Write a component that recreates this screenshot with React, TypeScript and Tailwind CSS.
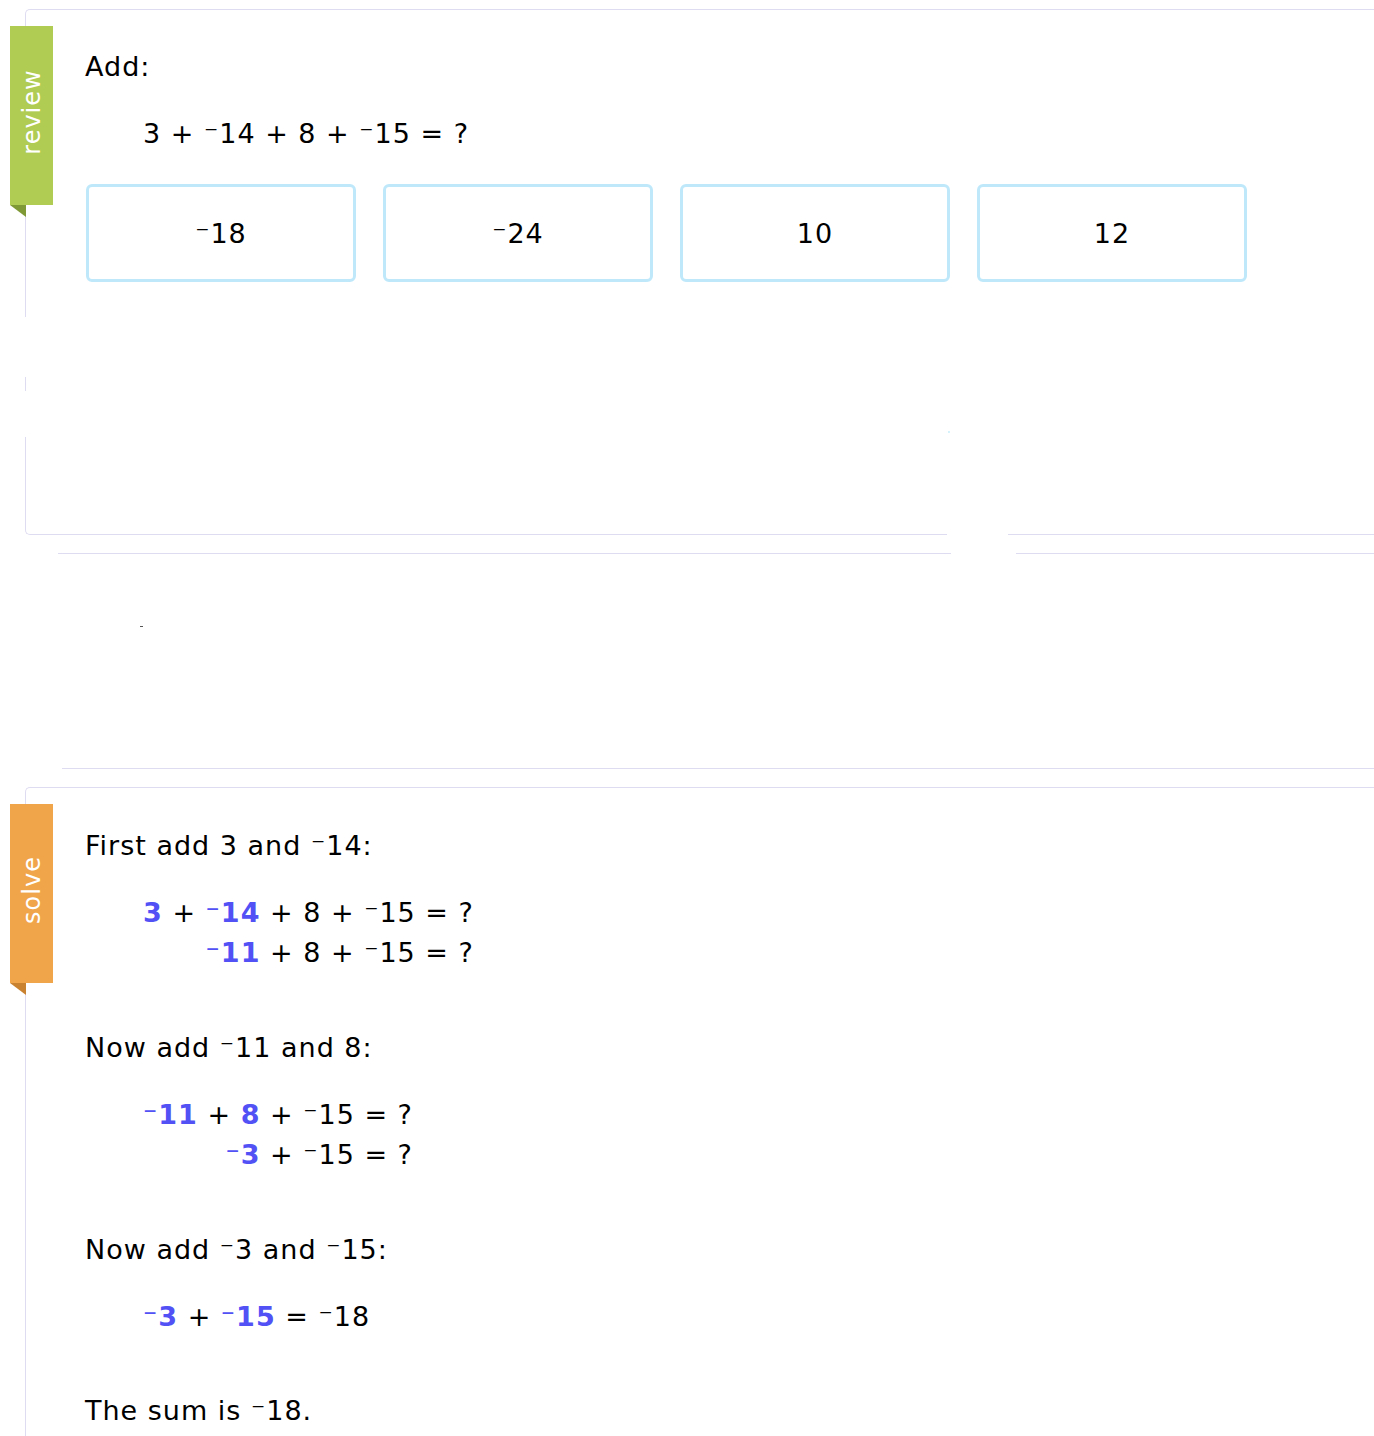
const font = { fontFamily: '"DejaVu Sans", Verdana, sans-serif' };

function Ribbon({ label, color, fold }: { label: string; color: string; fold: string }) {
  return (
    <div className="absolute left-[-16px] top-[16px]">
      <div className={`w-[43px] h-[179px] ${color} flex items-center justify-center pb-[8px]`}>
        <span className="text-white text-[24px] leading-none -rotate-90 whitespace-nowrap">{label}</span>
      </div>
      <svg width="16" height="12" className="block">
        <polygon points="0,0 16,0 16,12" className={fold} />
      </svg>
    </div>
  );
}

const B = ({ children }: { children: React.ReactNode }) => (
  <span className="font-bold text-[#5151f5]">{children}</span>
);

function Equation({ rows }: { rows: [React.ReactNode, React.ReactNode][] }) {
  return (
    <div className="ml-[58px] grid grid-cols-[auto_auto] w-fit">
      {rows.map(([a, b], i) => (
        <div key={i} className="contents">
          <div className="text-right whitespace-pre">{a}</div>
          <div className="whitespace-pre">{b}</div>
        </div>
      ))}
    </div>
  );
}

const answers = ["⁻18", "⁻24", "10", "12"];

export default function App() {
  return (
    <div style={font} className="relative w-[1374px] h-[1436px] overflow-hidden bg-white text-black text-[27px] leading-[40px] tracking-[1px]">
      {/* review card */}
      <div className="relative ml-[25px] mt-[9px] h-[526px] border-t border-l border-b border-[#dedcf1] rounded-tl-[5px] rounded-bl-[5px] pl-[59px] pt-[37px]">
        <Ribbon label="review" color="bg-[#b0cc53]" fold="fill-[#7e9935]" />
        <div>Add:</div>
        <div className="mt-[27px] ml-[58px] whitespace-pre">3 + ⁻14 + 8 + ⁻15 = ?</div>
        <div className="mt-[30px] flex gap-[27px] pl-px">
          {answers.map((a) => (
            <div key={a} className="w-[270px] h-[98px] border-[3px] border-[#bfe9fb] rounded-[6px] flex items-center justify-center pt-[2px]">
              {a}
            </div>
          ))}
        </div>
        {/* rendering gaps in the card border */}
        <div className="absolute left-[-1px] top-[307px] w-[2px] h-[60px] bg-white" />
        <div className="absolute left-[-1px] top-[381px] w-[2px] h-[46px] bg-white" />
        <div className="absolute left-[921px] bottom-[-1px] w-[61px] h-[2px] bg-white" />
        <div className="absolute left-[922px] top-[421px] w-[2px] h-[2px] bg-[#d6f3fb]" />
      </div>

      {/* divider lines */}
      <div className="mt-[18px] flex">
        <div className="ml-[58px] w-[893px] border-t border-[#dedcf1]" />
        <div className="ml-[65px] flex-1 border-t border-[#dedcf1]" />
      </div>
      <div className="relative h-[214px]">
        <div className="absolute left-[140px] top-[72px] w-[3px] h-px bg-[#555]" />
      </div>
      <div className="ml-[62px] border-t border-[#dedcf1]" />

      {/* solve card */}
      <div className="relative ml-[25px] mt-[18px] h-[700px] border-t border-l border-[#dedcf1] rounded-tl-[5px] pl-[59px] pt-[38px]">
        <Ribbon label="solve" color="bg-[#f0a54a]" fold="fill-[#c98230]" />
        <div>First add 3 and ⁻14:</div>
        <div className="mt-[27px]">
          <Equation
            rows={[
              [<><B>3</B> + <B>⁻14</B></>, " + 8 + ⁻15 = ?"],
              [<B>⁻11</B>, " + 8 + ⁻15 = ?"],
            ]}
          />
        </div>
        <div className="mt-[55px]">Now add ⁻11 and 8:</div>
        <div className="mt-[27px]">
          <Equation
            rows={[
              [<><B>⁻11</B> + <B>8</B></>, " + ⁻15 = ?"],
              [<B>⁻3</B>, " + ⁻15 = ?"],
            ]}
          />
        </div>
        <div className="mt-[55px]">Now add ⁻3 and ⁻15:</div>
        <div className="mt-[27px]">
          <Equation rows={[[<><B>⁻3</B> + <B>⁻15</B></>, " = ⁻18"]]} />
        </div>
        <div className="mt-[54px]">The sum is ⁻18.</div>
      </div>
    </div>
  );
}
